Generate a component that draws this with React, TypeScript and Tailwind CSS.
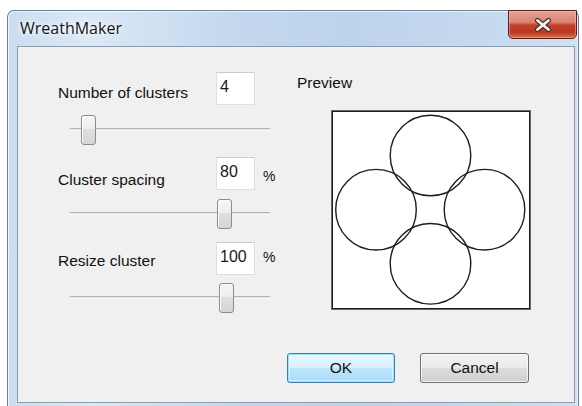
import React from "react";

type SliderProps = { thumb: number; className?: string };

function Slider({ thumb, className = "" }: SliderProps) {
  return (
    <div className={`relative ml-[12px] h-[30px] w-[200px] ${className}`}>
      <div className="absolute left-0 right-0 top-[13px] h-[3px] border-t border-[#b4b4b4] border-b border-b-[#fbfbfb] bg-[#e0e0e0]" />
      <div
        className="absolute top-0 h-[30px] w-[15px] rounded-[3px] border border-[#8c8c8c] bg-[linear-gradient(to_bottom,#f6f6f6_0%,#eeeeee_45%,#dedede_47%,#d6d6d6_100%)] shadow-[inset_1px_1px_0_#ffffff]"
        style={{ left: thumb }}
      />
    </div>
  );
}

function ValueBox({ value }: { value: string }) {
  return (
    <div className="h-[33px] w-[39px] shrink-0 border border-[#dcdfe5] border-t-[#c9ccd2] bg-white pl-[3px] pt-[5px] text-[16px] leading-[18px] text-[#1a1a1a]">
      {value}
    </div>
  );
}

function CloseGlyph() {
  return (
    <svg width="18" height="14" viewBox="0 0 18 14">
      <path d="M3.5 2.5 L14.5 11.5 M14.5 2.5 L3.5 11.5" stroke="#4b2a25" strokeWidth="5" strokeLinecap="round" fill="none" />
      <path d="M3.5 2.5 L14.5 11.5 M14.5 2.5 L3.5 11.5" stroke="#f4f4f4" strokeWidth="2.8" strokeLinecap="round" fill="none" />
    </svg>
  );
}

export default function App() {
  return (
    <div className="h-[406px] w-[582px] overflow-hidden bg-white font-['Liberation_Sans',Arial,sans-serif] text-[#111]">
      {/* window frame */}
      <div className="relative ml-[7px] mt-[10px] flex h-[396px] w-[572px] flex-col rounded-t-[7px] border-x border-t border-[#6c7e92] bg-[linear-gradient(90deg,#cbddf1_0%,#dbe8f6_14%,#c3d8ee_40%,#bcd3ec_60%,#c6daef_85%,#cfe0f2_100%)] shadow-[inset_1px_1px_0_rgba(255,255,255,0.7),inset_-1px_0_0_rgba(255,255,255,0.5)]">
        {/* title bar */}
        <div className="h-[35px] pl-[12px] pt-[7px] font-['Open_Sans','Noto_Sans',sans-serif] text-[16px] leading-[20px] text-[#141414] [text-shadow:0_0_8px_#ffffff,0_0_4px_#ffffff]">
          WreathMaker
        </div>

        {/* close button */}
        <div className="absolute left-[500px] top-[-1px] flex h-[29px] w-[69px] items-center justify-center rounded-b-[5px] border border-[#5a1e14] bg-[linear-gradient(to_bottom,#e6a395_0%,#d98370_42%,#c6412a_52%,#bb3720_78%,#d4714f_100%)] shadow-[inset_0_0_0_1px_rgba(255,200,190,0.45)]">
          <CloseGlyph />
        </div>

        {/* client area */}
        <div className="ml-[9px] mr-[3px] flex h-[357px] flex-col border border-[#8f9cab] bg-[#f0f0f0]">
          <div className="flex h-[266px]">
            {/* settings column */}
            <div className="flex w-[279px] flex-col pl-[40px] pt-[25px] text-[15.5px] leading-[18px]">
              <div className="flex h-[33px]">
                <div className="w-[158px] pt-[12px]">Number of clusters</div>
                <ValueBox value="4" />
              </div>
              <Slider thumb={11} className="mt-[10px]" />

              <div className="mt-[12px] flex h-[33px]">
                <div className="w-[158px] pt-[14px]">Cluster spacing</div>
                <ValueBox value="80" />
                <div className="ml-[8px] pt-[11px] text-[14px] leading-[16px]">%</div>
              </div>
              <Slider thumb={147} className="mt-[9px]" />

              <div className="mt-[13px] flex h-[33px]">
                <div className="w-[158px] pt-[10px]">Resize cluster</div>
                <ValueBox value="100" />
                <div className="ml-[8px] pt-[7px] text-[14px] leading-[16px]">%</div>
              </div>
              <Slider thumb={149} className="mt-[8px]" />
            </div>

            {/* preview column */}
            <div className="flex flex-col pt-[27px]">
              <div className="text-[15.5px] leading-[18px]">Preview</div>
              <div className="ml-[34px] mt-[18px] h-[200px] w-[200px] border border-[#6a6a6a]">
                <div className="h-[198px] w-[198px] border border-[#1c1c1c] bg-white">
                  <svg width="196" height="196" viewBox="2 2 196 196">
                    <g fill="none" stroke="#1e1e1e" strokeWidth="1.4">
                      <circle cx="99.5" cy="45.5" r="40.3" />
                      <circle cx="45" cy="99.7" r="40.3" />
                      <circle cx="153.5" cy="99.7" r="40.3" />
                      <circle cx="99.5" cy="153.8" r="40.3" />
                    </g>
                  </svg>
                </div>
              </div>
            </div>
          </div>

          {/* dialog buttons */}
          <div className="mt-[40px] flex gap-[25px] pl-[269px] text-[15.5px]">
            <div className="flex h-[30px] w-[108px] items-center justify-center rounded-[3px] border border-[#3c7fb1] bg-[linear-gradient(to_bottom,#eaf6fd_0%,#d9f0fc_48%,#bee6fd_50%,#a7d9f5_100%)] shadow-[inset_0_0_0_1px_#8fe3fb,inset_0_0_0_2px_rgba(255,255,255,0.5)]">
              OK
            </div>
            <div className="flex h-[30px] w-[109px] items-center justify-center rounded-[3px] border border-[#707070] bg-[linear-gradient(to_bottom,#f2f2f2_0%,#ebebeb_48%,#dddddd_50%,#cfcfcf_100%)] shadow-[inset_0_0_0_1px_rgba(255,255,255,0.7)]">
              Cancel
            </div>
          </div>
        </div>
      </div>
    </div>
  );
}
